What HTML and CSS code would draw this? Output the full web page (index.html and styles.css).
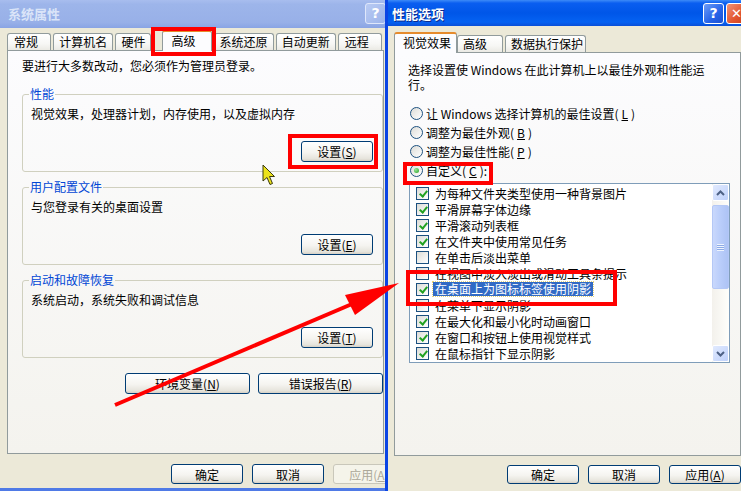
FILE: index.html
```html
<!DOCTYPE html>
<html lang="zh-CN">

<head>
    <meta charset="UTF-8">
    <meta name="viewport" content="width=device-width, initial-scale=1.0">
    <title>系统属性 - 性能选项</title>
    <link rel="stylesheet" href="styles.css">
</head>

<body>
    <div class="desktop">

        <!-- 系统属性 (inactive window, behind) -->
        <div class="window window-back">
            <div class="titlebar">
                <span class="title">系统属性</span>
                <span class="tb-btn tb-help">?</span>
            </div>
            <div class="client client-back">
                <div class="tabs">
                    <span class="tab tab-w46">常规</span>
                    <span class="tab">计算机名</span>
                    <span class="tab">硬件</span>
                    <span class="tab tab-active tab-gap">高级</span>
                    <span class="tab">系统还原</span>
                    <span class="tab">自动更新</span>
                    <span class="tab tab-w46">远程</span>
                </div>
                <div class="panel panel-back">
                    <p class="note">要进行大多数改动，您必须作为管理员登录。</p>

                    <fieldset class="group">
                        <legend>性能</legend>
                        <p>视觉效果，处理器计划，内存使用，以及虚拟内存</p>
                        <div class="group-actions">
                            <button class="btn">设置(<u>S</u>)</button>
                        </div>
                    </fieldset>

                    <fieldset class="group">
                        <legend>用户配置文件</legend>
                        <p>与您登录有关的桌面设置</p>
                        <div class="group-actions">
                            <button class="btn">设置(<u>E</u>)</button>
                        </div>
                    </fieldset>

                    <fieldset class="group">
                        <legend>启动和故障恢复</legend>
                        <p>系统启动，系统失败和调试信息</p>
                        <div class="group-actions">
                            <button class="btn">设置(<u>T</u>)</button>
                        </div>
                    </fieldset>

                    <div class="extra-actions">
                        <button class="btn btn-wide">环境变量(<u>N</u>)</button>
                        <button class="btn btn-wide">错误报告(<u>R</u>)</button>
                    </div>
                </div>
                <div class="dialog-actions dialog-actions-back">
                    <button class="btn">确定</button>
                    <button class="btn">取消</button>
                    <button class="btn" disabled>应用(<u>A</u>)</button>
                </div>
            </div>
        </div>

        <!-- 性能选项 (active window, front) -->
        <div class="window window-front">
            <div class="titlebar titlebar-active">
                <span class="title">性能选项</span>
                <span class="tb-btn tb-help">?</span>
                <span class="tb-btn tb-close">✕</span>
            </div>
            <div class="client client-front">
                <div class="tabs">
                    <span class="tab tab-active tab-visual">视觉效果</span>
                    <span class="tab tab-adv">高级</span>
                    <span class="tab tab-dep">数据执行保护</span>
                </div>
                <div class="panel panel-front">
                    <p class="intro">选择设置使 Windows 在此计算机上以最佳外观和性能运<br>行。</p>

                    <div class="radios">
                        <div class="radio-row"><span class="radio"></span>让 Windows 选择计算机的最佳设置(<u>L</u>)</div>
                        <div class="radio-row"><span class="radio"></span>调整为最佳外观(<u>B</u>)</div>
                        <div class="radio-row"><span class="radio"></span>调整为最佳性能(<u>P</u>)</div>
                        <div class="radio-row"><span class="radio radio-on"></span>自定义(<u>C</u>):</div>
                    </div>

                    <div class="listbox">
                        <div class="list-items">
                            <div class="item"><span class="check on"></span>为每种文件夹类型使用一种背景图片</div>
                            <div class="item"><span class="check on"></span>平滑屏幕字体边缘</div>
                            <div class="item"><span class="check on"></span>平滑滚动列表框</div>
                            <div class="item"><span class="check on"></span>在文件夹中使用常见任务</div>
                            <div class="item"><span class="check"></span>在单击后淡出菜单</div>
                            <div class="item"><span class="check"></span>在视图中淡入淡出或滑动工具条提示</div>
                            <div class="item"><span class="check on"></span><span class="selected">在桌面上为图标标签使用阴影</span></div>
                            <div class="item"><span class="check"></span>在菜单下显示阴影</div>
                            <div class="item"><span class="check on"></span>在最大化和最小化时动画窗口</div>
                            <div class="item"><span class="check on"></span>在窗口和按钮上使用视觉样式</div>
                            <div class="item"><span class="check on"></span>在鼠标指针下显示阴影</div>
                        </div>
                        <div class="scrollbar">
                            <span class="sb-btn">
                                <svg width="9" height="6" viewBox="0 0 9 6"><polyline points="1,5 4.5,1.5 8,5" fill="none" stroke="#4d6185" stroke-width="2"/></svg>
                            </span>
                            <span class="sb-thumb">
                                <span class="grip"></span>
                            </span>
                            <span class="sb-btn sb-down">
                                <svg width="9" height="6" viewBox="0 0 9 6"><polyline points="1,1 4.5,4.5 8,1" fill="none" stroke="#4d6185" stroke-width="2"/></svg>
                            </span>
                        </div>
                    </div>
                </div>
                <div class="dialog-actions">
                    <button class="btn">确定</button>
                    <button class="btn">取消</button>
                    <button class="btn">应用(<u>A</u>)</button>
                </div>
            </div>
        </div>

        <!-- annotations drawn over the screenshot -->
        <div class="mark mark-tab"></div>
        <div class="mark mark-perf"></div>
        <div class="mark mark-custom"></div>
        <div class="mark mark-item"></div>

        <svg class="annot" width="741" height="491" viewBox="0 0 741 491">
            <line x1="115" y1="405" x2="352" y2="304" stroke="#ff0000" stroke-width="4"/>
            <polygon points="345,295 399,283 355,315" fill="#ff0000"/>
            <path d="M263 165 L263 181 L267 177.5 L270 184.5 L272.5 183.5 L269.5 176.5 L274.5 176.5 Z"
                fill="#ece21a" stroke="#3a3a10" stroke-width="1"/>
        </svg>
    </div>
</body>

</html>
```

FILE: styles.css
```css
* {
    box-sizing: border-box;
}

html,
body {
    margin: 0;
    height: 100%;
}

body {
    font-family: "Noto Sans CJK SC", "Noto Sans", sans-serif;
    font-size: 12px;
    color: #000;
    background-color: #ece9d8;
    overflow: hidden;
}

.desktop {
    position: relative;
    width: 741px;
    height: 491px;
    overflow: hidden;
}

/* windows */
.window {
    position: absolute;
    top: 0;
    display: flex;
    flex-direction: column;
    background-color: #ece9d8;
}

.window-back {
    left: -3px;
    width: 420px;
    height: 491px;
    border: 3px solid #7b97e0;
    border-top: none;
    border-bottom-color: #4f7ae6;
}

.window-front {
    left: 385px;
    width: 370px;
    height: 500px;
    border: 3px solid #0b45e4;
    border-top: none;
    z-index: 2;
}

.titlebar {
    display: flex;
    align-items: center;
    gap: 2px;
    height: 28px;
    padding: 0 28px 2px 8px;
    background: linear-gradient(#a8bdee, #9db5ea 15%, #98b0e8 80%, #8aa4e4);
}

.titlebar-active {
    height: 26px;
    padding: 0 5px 0 4px;
    background: linear-gradient(#3d8bf8, #0a5ef0 12%, #0056e8 50%, #0562f2 85%, #0a4fd8);
}

.title {
    flex: 1;
    font-size: 13px;
    font-weight: bold;
    color: #dae4f8;
}

.titlebar-active .title {
    color: #fff;
    text-shadow: 1px 1px 0 #0c2a8c;
}

.tb-btn {
    display: flex;
    align-items: center;
    justify-content: center;
    width: 21px;
    height: 21px;
    border: 1px solid #dfe7fb;
    border-radius: 3px;
    color: #fff;
    font-family: "DejaVu Sans", sans-serif;
    font-weight: bold;
    font-size: 14px;
    background: linear-gradient(135deg, #b9cbf3, #9cb3ea);
}

.titlebar-active .tb-btn {
    border-color: #fff;
    background: linear-gradient(135deg, #6c9cf7, #2563e8 60%, #1d50d0);
}

.titlebar-active .tb-close {
    background: linear-gradient(135deg, #f19376, #e2542e 60%, #c8401e);
    font-size: 13px;
}

.client {
    display: flex;
    flex-direction: column;
    flex: 1;
}

.client-back {
    padding: 2px 30px 0 7px;
}

.client-front {
    padding: 6px 11px 0 6px;
}

/* tabs */
.tabs {
    display: flex;
    align-items: flex-end;
    height: 20px;
}

.tab {
    height: 17px;
    padding: 0 5px;
    margin-right: 2px;
    line-height: 16px;
    border: 1px solid #919b9c;
    border-bottom: none;
    border-radius: 3px 3px 0 0;
    background: linear-gradient(#fff, #f7f7f5 60%, #ebeae4);
    white-space: nowrap;
}

.tab-w46 {
    width: 46px;
    padding-left: 6px;
}

.tab-gap {
    margin-left: 9px;
}

.tab-active {
    position: relative;
    z-index: 1;
    height: 21px;
    width: 51px;
    margin-bottom: -1px;
    padding-left: 8px;
    line-height: 18px;
    border-top: 2px solid #e68b2c;
    background: #fcfcfe;
}

.tab-visual {
    width: 63px;
    padding-left: 8px;
    margin-right: 0;
}

.tab-adv {
    width: 46px;
}

.tab-dep {
    width: 81px;
}

/* tab panels */
.panel {
    border: 1px solid #919b9c;
    background: linear-gradient(#fcfcfe, #f4f3ee);
    height: 404px;
}

.panel-back {
    padding: 8px 0 0 14px;
}

.panel-front {
    padding: 9px 0 0 13px;
}

.note {
    margin: 0;
    line-height: 14px;
}

.group {
    width: 361px;
    margin: 8px 0 0;
    padding: 6px 9px 9px 8px;
    min-width: 0;
    border: 1px solid #d0d0bf;
    border-radius: 3px;
}

.note + .group {
    margin-top: 14px;
}

.group legend {
    margin-left: -2px;
    padding: 0 1px;
    line-height: 14px;
    color: #0046d5;
}

.group p {
    margin: 0 0 20px;
    line-height: 14px;
}

.group-actions {
    display: flex;
    justify-content: flex-end;
}

.extra-actions {
    display: flex;
    justify-content: flex-end;
    gap: 8px;
    width: 361px;
    margin-top: 15px;
}

/* buttons */
.btn {
    font: inherit;
    width: 72px;
    height: 21px;
    padding: 0;
    color: #000;
    border: 1px solid #003c74;
    border-radius: 3px;
    background: linear-gradient(#fff, #f5f4f0 55%, #e6e4dc 88%, #d6d0c5);
}

.btn-wide {
    width: 125px;
}

.btn:disabled {
    color: #aca899;
    border-color: #c9c7ba;
    background: #f5f4ea;
}

.dialog-actions {
    display: flex;
    justify-content: flex-end;
    gap: 9px;
    margin-top: 9px;
}

.dialog-actions .btn {
    height: 19px;
}

.dialog-actions-back {
    justify-content: flex-start;
    margin: 10px 0 0 164px;
}

.dialog-actions-back .btn {
    flex-shrink: 0;
    height: 20px;
}

/* performance options */
.intro {
    margin: 0;
    line-height: 15px;
}

.radios {
    margin-top: 12px;
}

.radio-row {
    display: flex;
    align-items: center;
    gap: 3px;
    height: 19px;
    padding-left: 2px;
}

.radio {
    position: relative;
    width: 13px;
    height: 13px;
    border: 1px solid #1c5180;
    border-radius: 50%;
    background: linear-gradient(135deg, #dcdcd7, #fff);
}

.radio-on::after {
    content: "";
    position: absolute;
    left: 3px;
    top: 3px;
    width: 5px;
    height: 5px;
    border-radius: 50%;
    background: radial-gradient(circle at 35% 35%, #9ae59a, #21a121);
}

.listbox {
    display: flex;
    width: 321px;
    height: 180px;
    margin: 3px 0 0 1px;
    border: 1px solid #7f9db9;
    background-color: #fff;
    overflow: hidden;
}

.list-items {
    flex: 1;
    padding: 1px 0 0 6px;
}

.item {
    display: flex;
    align-items: center;
    gap: 6px;
    height: 16px;
    white-space: nowrap;
}

.check {
    position: relative;
    flex-shrink: 0;
    width: 13px;
    height: 13px;
    border: 1px solid #1c5180;
    background: linear-gradient(135deg, #dcdcd7, #fff);
}

.check.on::after {
    content: "";
    position: absolute;
    left: 4px;
    top: 1px;
    width: 3px;
    height: 6px;
    border: solid #21a121;
    border-width: 0 2px 2px 0;
    transform: rotate(40deg);
}

.selected {
    margin-left: -2px;
    padding: 0 2px;
    line-height: 14px;
    color: #fff;
    background-color: #316ac5;
    outline: 1px dotted #e6d27a;
}

/* scrollbar */
.scrollbar {
    display: flex;
    flex-direction: column;
    width: 17px;
    background: linear-gradient(90deg, #f3f1ec, #fefefb);
}

.sb-btn {
    display: flex;
    align-items: center;
    justify-content: center;
    height: 17px;
    border: 1px solid #fff;
    border-radius: 2px;
    background: linear-gradient(135deg, #e1eafe, #bfd1fb);
}

.sb-down {
    margin-top: auto;
}

.sb-thumb {
    display: flex;
    align-items: center;
    justify-content: center;
    height: 84px;
    margin-top: 4px;
    border: 1px solid #b4c8f6;
    border-radius: 2px;
    background: linear-gradient(90deg, #c9d8fc, #b9cdfa 50%, #adc3f5);
}

.grip {
    width: 7px;
    height: 7px;
    background: repeating-linear-gradient(#eef4fe 0 1px, #8caae6 1px 2px);
}

/* annotations */
.mark {
    position: absolute;
    z-index: 5;
    border: 4px solid #ff0000;
}

.mark-tab {
    left: 151px;
    top: 27px;
    width: 65px;
    height: 29px;
}

.mark-perf {
    left: 288px;
    top: 134px;
    width: 90px;
    height: 35px;
}

.mark-custom {
    left: 403px;
    top: 162px;
    width: 90px;
    height: 23px;
}

.mark-item {
    left: 406px;
    top: 270px;
    width: 211px;
    height: 36px;
}

.annot {
    position: absolute;
    left: 0;
    top: 0;
    z-index: 6;
}
```
